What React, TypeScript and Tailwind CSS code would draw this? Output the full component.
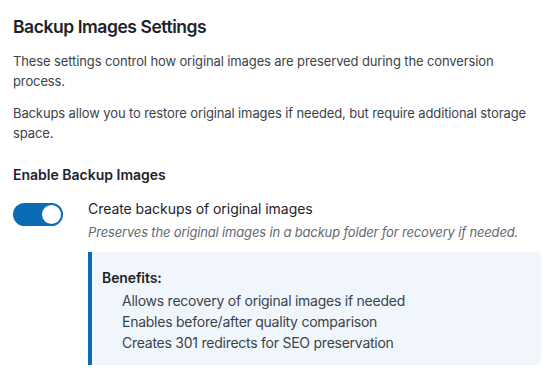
export default function App() {
  const benefits = [
    'Allows recovery of original images if needed',
    'Enables before/after quality comparison',
    'Creates 301 redirects for SEO preservation',
  ]

  return (
    <div className="min-h-screen bg-white pt-[15px] pl-[13px] pr-4 font-['Inter',sans-serif] text-[13px] tracking-[-0.12px] text-[#3c434a]">
      <h2 className="text-[17.5px] font-semibold leading-[24px] tracking-[-0.45px] text-[#1d2327]">Backup Images Settings</h2>
      <p className="mt-[13px] leading-[19.5px]">
        These settings control how original images are preserved during the conversion process.
      </p>
      <p className="mt-[13px] leading-[19.5px]">
        Backups allow you to restore original images if needed, but require additional storage space.
      </p>

      <h3 className="mt-[22px] text-[14px] font-semibold leading-[20px] tracking-normal text-[#1d2327]">Enable Backup Images</h3>

      <div className="mt-[14px] flex gap-[25px]">
        <div className="mt-[4px] flex h-[23px] w-[50px] shrink-0 items-center justify-end rounded-full bg-[#0b6cb6] pr-[2.5px]">
          <span className="h-[18.5px] w-[18.5px] rounded-full bg-white" />
        </div>
        <div className="flex-1">
          <div className="text-[14px] leading-[20px] tracking-[-0.05px] text-[#1d2327]">Create backups of original images</div>
          <div className="mt-[4px] italic leading-[19.5px] tracking-[-0.16px] text-[#646970]">
            Preserves the original images in a backup folder for recovery if needed.
          </div>
          <div className="mt-[9px] rounded-r border-l-4 border-[#0b6cb6] bg-[#f0f6fc] pt-[16px] pb-[12px] pl-[10px] text-[14px]">
            <div className="font-semibold leading-[20px] tracking-[-0.1px] text-[#1d2327]">Benefits:</div>
            <ul className="mt-[2px] pl-5">
              {benefits.map((b) => (
                <li key={b} className="leading-[21px] tracking-[-0.25px]">{b}</li>
              ))}
            </ul>
          </div>
        </div>
      </div>
    </div>
  )
}
